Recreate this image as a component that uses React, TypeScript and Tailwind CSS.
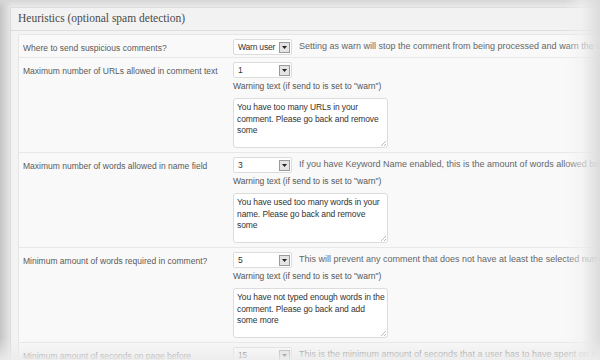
import React from "react";

type Row = {
  label: string;
  value: string;
  desc?: string;
  warning?: string[];
};

const rows: Row[] = [
  {
    label: "Where to send suspicious comments?",
    value: "Warn user",
    desc: "Setting as warn will stop the comment from being processed and warn the user why",
  },
  {
    label: "Maximum number of URLs allowed in comment text",
    value: "1",
    warning: ["You have too many URLs in your", "comment. Please go back and remove", "some"],
  },
  {
    label: "Maximum number of words allowed in name field",
    value: "3",
    desc: "If you have Keyword Name enabled, this is the amount of words allowed before the",
    warning: ["You have used too many words in your", "name. Please go back and remove", "some"],
  },
  {
    label: "Minimum amount of words required in comment?",
    value: "5",
    desc: "This will prevent any comment that does not have at least the selected number of w",
    warning: ["You have not typed enough words in the", "comment. Please go back and add", "some more"],
  },
  {
    label: "Minimum amount of seconds on page before",
    value: "15",
    desc: "This is the minimum amount of seconds that a user has to have spent on the page",
  },
];

function Select({ value }: { value: string }) {
  return (
    <div className="flex h-[16px] w-[59px] shrink-0 items-center justify-between rounded-[2px] border border-[#dcdcdc] bg-white pl-[4px] pr-[1px]">
      <span className="whitespace-nowrap text-[8.5px] leading-none tracking-[-0.2px] text-[#333]">
        {value}
      </span>
      <span className="flex h-[11px] w-[11px] items-center justify-center border border-[#9a9a9a] bg-[#e4e4e4]">
        <svg width="5" height="3" viewBox="0 0 5 3">
          <path d="M0 0h5L2.5 3z" fill="#222" />
        </svg>
      </span>
    </div>
  );
}

export default function App() {
  return (
    <div
      className="relative h-[360px] w-[600px] overflow-hidden bg-[#ececec]"
      style={{ fontFamily: '"Liberation Sans", Arial, sans-serif' }}
    >
      <div className="ml-[10px] mt-[7px] w-[620px] border border-[#dedede] bg-[#f3f3f3]">
        <div className="flex h-[23px] items-center border-b border-[#dedede] bg-[#f2f2f2] px-[7px]">
          <span
            className="text-[11.5px] text-[#4a4a4a]"
            style={{ fontFamily: '"Liberation Serif", "DejaVu Serif", serif' }}
          >
            Heuristics (optional spam detection)
          </span>
        </div>
        <div className="px-[7px] pt-[3px]">
          <div className="border border-[#e6e6e6] bg-[#f9f9f9]">
            {rows.map((row, i) => (
              <div
                key={i}
                className={`flex border-[#e8e8e8] pt-[4px] ${i > 0 ? "border-t" : ""} ${row.warning ? "pb-[4px]" : "pb-[2px]"}`}
              >
                <div className="w-[214px] shrink-0 pl-[4px] pt-[3px] text-[8.5px] leading-[12px] text-[#5a5a5a]">
                  {row.label}
                </div>
                <div className="min-w-0 flex-1">
                  <div className="flex items-center gap-[7px]">
                    <Select value={row.value} />
                    {row.desc && (
                      <span className="whitespace-nowrap text-[9px] text-[#666]">{row.desc}</span>
                    )}
                  </div>
                  {row.warning && (
                    <>
                      <div className="mt-[2px] text-[8.5px] leading-[12px] text-[#555]">
                        Warning text (if send to is set to "warn")
                      </div>
                      <div className="relative mt-[6px] h-[50px] w-[155px] rounded-[3px] border border-[#dcdcdc] bg-white px-[3px] pt-[3px] text-[8.5px] leading-[11.5px] tracking-[-0.1px] text-[#333]">
                        {row.warning.map((line, j) => (
                          <div key={j} className="whitespace-nowrap">
                            {line}
                          </div>
                        ))}
                        <svg className="absolute bottom-[1px] right-[1px]" width="6" height="6" viewBox="0 0 6 6">
                          <path d="M6 1L1 6M6 4L4 6" stroke="#aaa" strokeWidth="0.8" />
                        </svg>
                      </div>
                    </>
                  )}
                </div>
              </div>
            ))}
          </div>
        </div>
      </div>

      {/* vignette */}
      <div className="pointer-events-none absolute inset-y-0 left-0 w-[12px] bg-linear-to-r from-[#c4c4c4] to-transparent" />
      <div className="pointer-events-none absolute inset-x-0 top-0 h-[8px] bg-linear-to-b from-[#d6d6d6] to-transparent" />
      <div className="pointer-events-none absolute inset-y-0 right-0 w-[36px] bg-linear-to-l from-[#dcdcdc] via-[#f0f0f0]/60 to-transparent" />
      <div className="pointer-events-none absolute inset-x-0 bottom-0 h-[22px] bg-linear-to-t from-[#ececec]/90 to-transparent" />
    </div>
  );
}
